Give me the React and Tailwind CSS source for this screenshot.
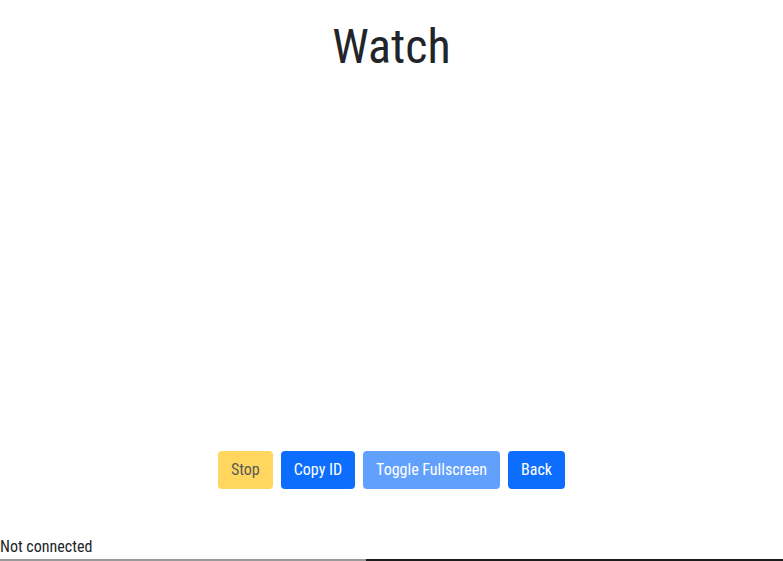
import React from 'react';

const App = () => {
  return (
    <div
      className="flex h-screen w-full flex-col bg-white text-[#212529]"
      style={{ fontFamily: '"Roboto Condensed", Roboto, sans-serif', fontStretch: 'condensed' }}
    >
      {/* Titel */}
      <h1 className="pt-[18px] text-center text-[48px] font-normal leading-[1.2]">Watch</h1>

      {/* Video-Fläche */}
      <div className="flex-1" />

      {/* Buttons */}
      <div className="flex justify-center gap-2">
        <button className="h-[38px] rounded-[4px] bg-[#ffd75e] px-[13px] text-[16px] text-[#595959]">Stop</button>
        <button className="h-[38px] rounded-[4px] bg-[#0d6efd] px-[13px] text-[16px] text-white">Copy ID</button>
        <button className="h-[38px] rounded-[4px] bg-[#62a0fd] px-[13px] text-[16px] text-white">Toggle Fullscreen</button>
        <button className="h-[38px] rounded-[4px] bg-[#0d6efd] px-[13px] text-[16px] text-white">Back</button>
      </div>

      {/* Status */}
      <div className="mt-[48px] text-[16px] leading-[20px]">Not connected</div>
      <div className="mt-[2px] flex h-[2px] w-full">
        <div className="w-[366px] bg-[#9a9a9a]" />
        <div className="flex-1 bg-[#1c1c1c]" />
      </div>
    </div>
  );
};

export default App;
